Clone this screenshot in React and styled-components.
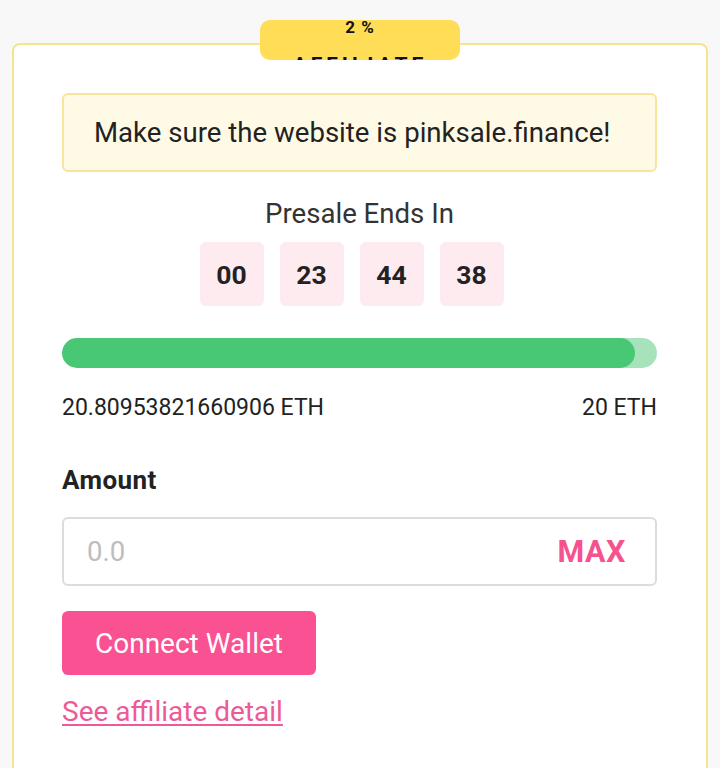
import React from "react";
import styled, { createGlobalStyle } from "styled-components";

const Global = createGlobalStyle`
  html, body { margin: 0; padding: 0; background: #f8f8f8; }
  body { font-family: Roboto, "Noto Sans", sans-serif; color: #222; }
`;

const Page = styled.div`
  padding: 43px 12px 0 12px;
  height: 768px;
  box-sizing: border-box;
  overflow: hidden;
`;

const Card = styled.div`
  position: relative;
  width: 696px;
  box-sizing: border-box;
  background: #fff;
  border: 2px solid #f8e28a;
  border-radius: 8px;
  padding: 48px 49px 60px 48px;
  display: flex;
  flex-direction: column;
`;

const Badge = styled.div`
  position: absolute;
  top: -25px;
  left: 50%;
  transform: translateX(-50%);
  width: 200px;
  height: 40px;
  border-radius: 10px;
  background: #ffdd57;
  overflow: hidden;
  display: flex;
  flex-direction: column;
  align-items: center;
  gap: 19px;
  font-weight: 700;
  color: #111;
`;

const BadgeLine = styled.div`
  margin-top: ${(p) => p.$offset || 0}px;
  font-size: ${(p) => p.$size || 17}px;
  line-height: ${(p) => p.$size || 17}px;
  letter-spacing: ${(p) => p.$spacing || 0}px;
  white-space: nowrap;
`;

const Notice = styled.div`
  height: 79px;
  box-sizing: border-box;
  border: 2px solid #f7e59a;
  background: #fffae6;
  border-radius: 6px;
  padding: 0 30px;
  display: flex;
  align-items: center;
  font-size: 27.6px;
  color: #222;
`;

const Title = styled.div`
  margin-top: 28px;
  text-align: center;
  font-size: 27.6px;
  line-height: 28px;
  color: #333;
`;

const Countdown = styled.div`
  margin-top: 14px;
  display: flex;
  justify-content: center;
`;

const TimeBox = styled.div`
  width: 64px;
  height: 64px;
  margin-right: 16px;
  border-radius: 6px;
  background: #fdebf0;
  display: flex;
  align-items: center;
  justify-content: center;
  font-size: 26.5px;
  font-weight: 700;
  color: #222;
`;

const Track = styled.div`
  margin-top: 32px;
  height: 30px;
  border-radius: 15px;
  background: #a6e3bb;
  overflow: hidden;
`;

const Fill = styled.div`
  height: 100%;
  border-radius: 15px;
  background: #48c774;
`;

const Labels = styled.div`
  margin-top: 28px;
  display: flex;
  justify-content: space-between;
  font-size: 23px;
  line-height: 24px;
  color: #222;
`;

const Label = styled.div`
  font-size: 26px;
  line-height: 28px;
  letter-spacing: 0.4px;
  font-weight: 700;
  margin-top: 46px;
  color: #222;
`;

const InputWrap = styled.div`
  margin-top: 23px;
  height: 69px;
  box-sizing: border-box;
  border: 2px solid #dcdcdc;
  border-radius: 6px;
  display: flex;
  align-items: center;
  padding: 0 29px 0 23px;
`;

const Input = styled.input`
  flex: 1;
  min-width: 0;
  border: none;
  outline: none;
  background: transparent;
  font-family: Roboto, sans-serif;
  font-size: 27.5px;
  color: #222;
  padding: 0;
  &::placeholder { color: #bdbdbd; }
`;

const Max = styled.span`
  font-size: 30.5px;
  line-height: 32px;
  font-weight: 700;
  letter-spacing: 0.6px;
  color: #f5528f;
`;

const Button = styled.button`
  margin-top: 25px;
  align-self: flex-start;
  width: 254px;
  height: 64px;
  border: none;
  border-radius: 6px;
  background: #f95192;
  color: #fff;
  font-family: Roboto, sans-serif;
  font-size: 28px;
  cursor: pointer;
`;

const Link = styled.a`
  margin-top: 23px;
  align-self: flex-start;
  font-size: 28px;
  line-height: 28px;
  color: #ec5b98;
  text-decoration: underline;
  text-decoration-thickness: 2px;
  text-underline-offset: 3px;
`;

export default function App() {
  const raised = 20.80953821660906;
  const pct = 96.3;
  return (
    <>
      <Global />
      <Page>
        <Card>
          <Badge>
            <BadgeLine $offset={-1} $spacing={1}>2 %</BadgeLine>
            <BadgeLine $size={21} $spacing={4}>AFFILIATE</BadgeLine>
          </Badge>
          <Notice>Make sure the website is pinksale.finance!</Notice>
          <Title>Presale Ends In</Title>
          <Countdown>
            {["00", "23", "44", "38"].map((t, i) => (
              <TimeBox key={i}>{t}</TimeBox>
            ))}
          </Countdown>
          <Track>
            <Fill style={{ width: `${pct}%` }} />
          </Track>
          <Labels>
            <span>{raised} ETH</span>
            <span>20 ETH</span>
          </Labels>
          <Label>Amount</Label>
          <InputWrap>
            <Input placeholder="0.0" />
            <Max>MAX</Max>
          </InputWrap>
          <Button>Connect Wallet</Button>
          <Link href="#">See affiliate detail</Link>
        </Card>
      </Page>
    </>
  );
}
